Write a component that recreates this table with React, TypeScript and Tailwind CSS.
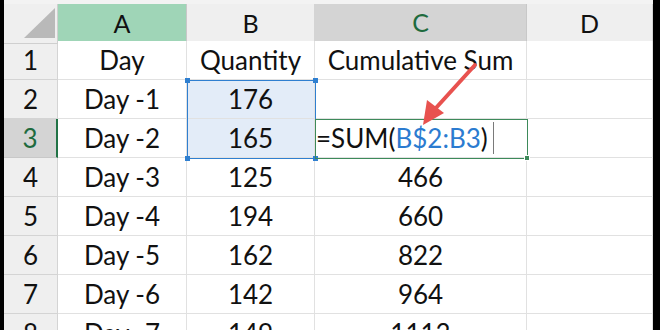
import React from "react";

const cols = ["A", "B", "C", "D"];

const rows: { day: string; qty: string; sum: string }[] = [
  { day: "Day", qty: "Quantity", sum: "Cumulative Sum" },
  { day: "Day -1", qty: "176", sum: "" },
  { day: "Day -2", qty: "165", sum: "" },
  { day: "Day -3", qty: "125", sum: "466" },
  { day: "Day -4", qty: "194", sum: "660" },
  { day: "Day -5", qty: "162", sum: "822" },
  { day: "Day -6", qty: "142", sum: "964" },
  { day: "Day -7", qty: "149", sum: "1113" },
];

const cell = "flex items-center justify-center border-r border-b border-[#e1e1e1] h-[39px] whitespace-nowrap overflow-visible";

export default function App() {
  return (
    <div
      className="w-[660px] h-[330px] flex bg-black overflow-hidden text-[26px] text-[#111]"
      style={{ fontFamily: "Lato, 'Open Sans', sans-serif" }}
    >
      <div className="ml-[4px] w-[649px] flex flex-col bg-[#f3f3f3] pt-[4px] relative">
        {/* column headers */}
        <div className="grid grid-cols-[54px_129px_128px_212px_126px] h-[37px] text-[25px]">
          <div className="relative bg-[#efefef] border-r border-b border-[#cfcfcf]">
            <svg className="absolute left-0 top-0" width="54" height="37" viewBox="0 0 54 37">
              <polygon points="20,34 51,4 51,34" fill="#b9b9b9" />
            </svg>
          </div>
          {cols.map((c) => (
            <div
              key={c}
              className={
                c === "A"
                  ? "flex items-center justify-center bg-[#9fd5b7] border-r border-b border-[#c8c8c8]"
                  : c === "C"
                  ? "flex items-center justify-center bg-[#d4d4d4] text-[#1e6b3e] border-r border-[#c8c8c8] border-b-2 border-b-[#217346]"
                  : "flex items-center justify-center bg-[#efefef] border-r border-b border-[#d4d4d4]"
              }
            >
              {c}
            </div>
          ))}
        </div>

        {/* body */}
        {rows.map((r, i) => {
          const n = i + 1;
          const active = n === 3;
          return (
            <div key={n} className="grid grid-cols-[54px_129px_128px_212px_126px] bg-white">
              <div
                className={
                  active
                    ? "flex items-center justify-center h-[39px] bg-[#d4d4d4] text-[#1e6b3e] border-b border-[#c8c8c8] border-r-2 border-r-[#217346]"
                    : "flex items-center justify-center h-[39px] bg-[#efefef] border-r border-b border-[#d4d4d4]"
                }
              >
                {n}
              </div>
              <div className={cell}>{r.day}</div>
              <div className={`${cell} ${n === 2 || n === 3 ? "bg-[#e3ecf8]" : ""}`}>{r.qty}</div>
              {active ? (
                <div className="flex items-center h-[39px] pl-[1px] border-b border-[#e1e1e1]">
                  <span>=SUM(</span>
                  <span className="text-[#2b7bd0]">B$2:B3</span>
                  <span>)</span>
                  <span className="ml-[5px] w-[1px] h-[32px] bg-[#7a7a7a]" />
                </div>
              ) : (
                <div className={cell}>{r.sum}</div>
              )}
              <div className={cell} />
            </div>
          );
        })}

        {/* B2:B3 selection */}
        <div className="absolute left-[183px] top-[80px] w-[129px] h-[79px] border-[1.5px] border-[#2f7fd0] pointer-events-none" />
        {[
          [181, 78],
          [309, 78],
          [181, 156],
          [309, 156],
        ].map(([x, y], k) => (
          <div key={k} className="absolute w-[5px] h-[5px] bg-[#2f7fd0]" style={{ left: x, top: y }} />
        ))}

        {/* C3 active cell */}
        <div className="absolute left-[311px] top-[119px] w-[213px] h-[40px] border-[1.5px] border-[#3d8a5a] pointer-events-none" />
        <div className="absolute left-[520px] top-[155px] w-[6px] h-[6px] bg-[#3d8a5a] border border-white" />

        {/* arrow */}
        <svg className="absolute left-0 top-0 pointer-events-none" width="649" height="326" viewBox="0 0 649 326">
          <line x1="471" y1="65" x2="431" y2="109" stroke="#e8524f" strokeWidth="4" strokeLinecap="round" />
          <polygon points="419,125 423,100 440,113" fill="#e8524f" />
        </svg>
      </div>
    </div>
  );
}
